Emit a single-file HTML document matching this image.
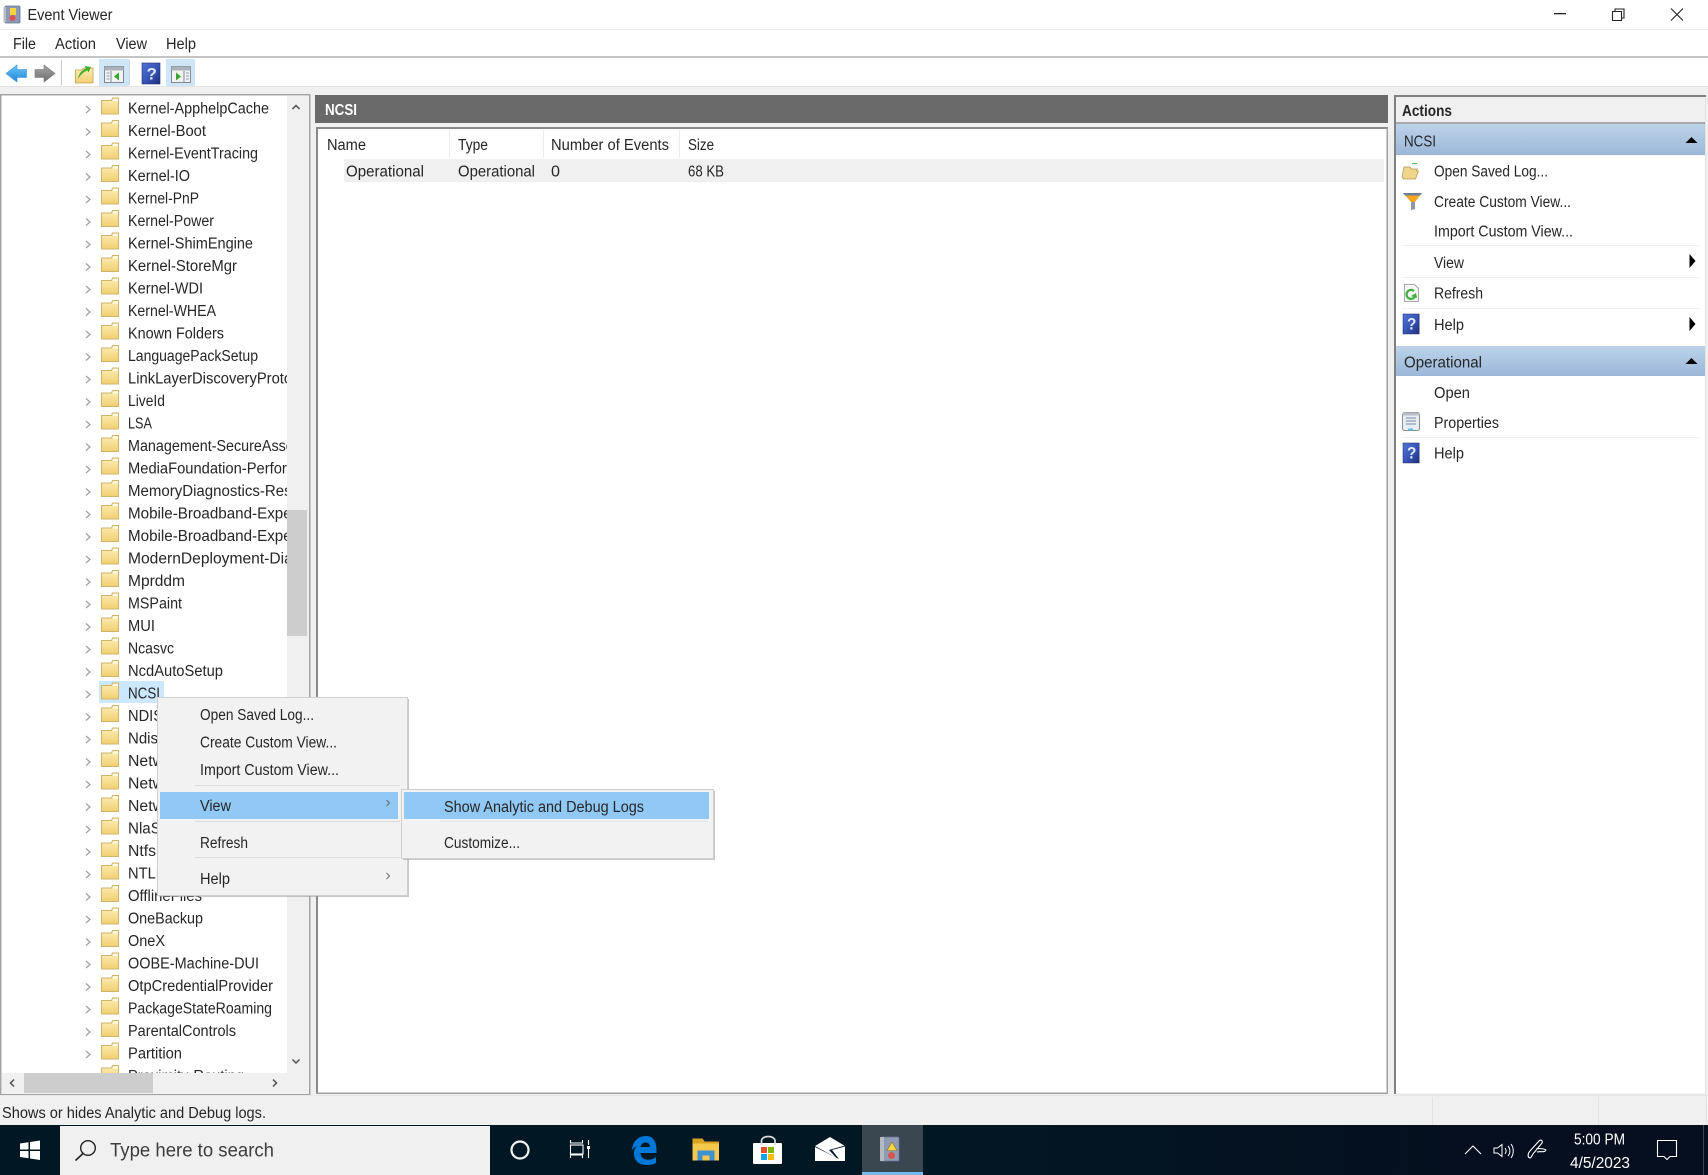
<!DOCTYPE html>
<html><head><meta charset="utf-8"><title>Event Viewer</title>
<style>
html,body{margin:0;padding:0;background:#f0f0f0;width:1708px;height:1175px;overflow:hidden}
svg{display:block}
text{font-family:"Liberation Sans",sans-serif;font-size:15.5px;fill:#262626}
</style></head><body>
<svg width="1708" height="1175" viewBox="0 0 1708 1175" xmlns="http://www.w3.org/2000/svg">
<defs>
<linearGradient id="band" x1="0" y1="0" x2="0" y2="1"><stop offset="0" stop-color="#bcd3ea"/><stop offset="1" stop-color="#9bb7d8"/></linearGradient>
<linearGradient id="fold" x1="0" y1="0" x2="0" y2="1"><stop offset="0" stop-color="#fdeeb6"/><stop offset="1" stop-color="#f1cf72"/></linearGradient>
<linearGradient id="hlp" x1="0" y1="0" x2="1" y2="1"><stop offset="0" stop-color="#4f74d8"/><stop offset=".55" stop-color="#3653b4"/><stop offset="1" stop-color="#1f2f7c"/></linearGradient>
<linearGradient id="blue" x1="0" y1="0" x2="0" y2="1"><stop offset="0" stop-color="#6cc4f6"/><stop offset="1" stop-color="#1e88dc"/></linearGradient>
<linearGradient id="gray" x1="0" y1="0" x2="0" y2="1"><stop offset="0" stop-color="#a8a8a8"/><stop offset="1" stop-color="#6c6c6c"/></linearGradient>
<linearGradient id="tb" x1="0" y1="0" x2="1" y2="0"><stop offset="0" stop-color="#021724"/><stop offset=".55" stop-color="#021724"/><stop offset=".85" stop-color="#050f1f"/><stop offset="1" stop-color="#050f1f"/></linearGradient>
<g id="r">
<path d="M86 -2l4 3.500l-4 3.500" fill="none" stroke="#a0a0a0" stroke-width="1.200"/>
<path d="M101.500 -7.500h10l1-2.500h6v16h-17z" fill="url(#fold)" stroke="#cfb46c" stroke-width="1"/>
<rect x="113" y="-9" width="5" height="2" fill="#fff" opacity=".8"/>
</g>
<g id="hq">
<rect x="0" y="0" width="18" height="21" fill="url(#hlp)" stroke="#22306f" stroke-width=".6"/>
<text x="4.500" y="16.500" style="font-size:17px;font-weight:bold;fill:#dfe6ff">?</text>
</g>
<clipPath id="tc"><rect x="0" y="96" width="287" height="977"/></clipPath>
</defs>

<!-- window chrome -->
<rect width="1708" height="1175" fill="#f0f0f0"/>
<rect width="1708" height="29" fill="#fff"/>
<rect y="29" width="1708" height="1" fill="#ececec"/>
<rect y="30" width="1708" height="26" fill="#fff"/>
<rect y="56" width="1708" height="2" fill="#c4c4c4"/>
<rect y="58" width="1708" height="28" fill="#fff"/>
<rect y="86" width="1708" height="1" fill="#e2e2e2"/>

<!-- title -->
<g>
<rect x="5" y="6" width="15" height="17" rx="1" fill="#8c9ab8" stroke="#66748f" stroke-width=".8"/>
<rect x="3.500" y="7" width="2.500" height="15" fill="#b8bcc4"/>
<rect x="10" y="8" width="6" height="7" fill="#f5d63c"/>
<circle cx="12.500" cy="18" r="3" fill="#d9534f"/>
</g>
<text x="27.500" y="20" style="font-size:15.500px" textLength="85" lengthAdjust="spacingAndGlyphs">Event Viewer</text>
<rect x="1554" y="13" width="12" height="1.300" fill="#222"/>
<path d="M1612.500 11.500h9v9h-9zM1615 11.500v-2.500h9v9h-2.500" fill="none" stroke="#222" stroke-width="1.100"/>
<path d="M1671 8.500l12 12M1683 8.500l-12 12" stroke="#222" stroke-width="1.100"/>

<!-- menubar -->
<text x="13" y="49" textLength="23" lengthAdjust="spacingAndGlyphs">File</text>
<text x="55" y="49" textLength="41" lengthAdjust="spacingAndGlyphs">Action</text>
<text x="116" y="49" textLength="31" lengthAdjust="spacingAndGlyphs">View</text>
<text x="166" y="49" textLength="30" lengthAdjust="spacingAndGlyphs">Help</text>

<!-- toolbar -->
<path d="M6 73.500l11-8.500v4.500h9.500v8h-9.500v4.500z" fill="url(#blue)" stroke="#3b94dc" stroke-width=".6"/>
<path d="M55 73.500l-11-8.500v4.500h-9v8h9v4.500z" fill="url(#gray)" stroke="#777" stroke-width=".6"/>
<rect x="61" y="60" width="1" height="25" fill="#c8c8c8"/>
<path d="M75.500 70h6l2-2h9.500v15h-17.500z" fill="url(#fold)" stroke="#c0a050" stroke-width=".8"/>
<path d="M78 79c1-6 4-9 8-10.500l-1.500-2.500 6.500 1-2.500 5.500-1-2c-3 1-6 3-9.500 8.500z" fill="#3fae2a"/>
<rect x="99" y="59" width="30" height="27" fill="#cfe5f8"/>
<rect x="104.500" y="66.500" width="19" height="16" fill="#f2f2f2" stroke="#7f8a92"/>
<rect x="104.500" y="66.500" width="19" height="4" fill="#aab3bb"/>
<path d="M111 71v11" stroke="#7f8a92"/>
<path d="M106.500 73h3M106.500 76h3M106.500 79h3" stroke="#8aa0b8"/>
<path d="M114 76.500l5-4v8z" fill="#35a82e"/>
<rect x="129" y="60" width="1" height="25" fill="#d4d4d4"/>
<g transform="translate(142,63)"><use href="#hq"/></g>
<rect x="166" y="59" width="29" height="27" fill="#cfe5f8"/>
<rect x="171.500" y="66.500" width="19" height="16" fill="#f2f2f2" stroke="#7f8a92"/>
<rect x="171.500" y="66.500" width="19" height="4" fill="#aab3bb"/>
<path d="M184 71v11" stroke="#7f8a92"/>
<path d="M186 73h3M186 76h3M186 79h3" stroke="#8aa0b8"/>
<path d="M181 76.500l-5-4v8z" fill="#35a82e"/>

<!-- tree pane -->
<rect x=".75" y="94.750" width="309" height="1000" fill="#fff" stroke="#a4a4a4" stroke-width="1.500"/>
<g clip-path="url(#tc)">
<rect x="99" y="681" width="65" height="22" fill="#cce8ff"/>
<use href="#r" y="108"/><text x="128" y="113.500" textLength="141" lengthAdjust="spacingAndGlyphs">Kernel-ApphelpCache</text>
<use href="#r" y="130.500"/><text x="128" y="136" textLength="78" lengthAdjust="spacingAndGlyphs">Kernel-Boot</text>
<use href="#r" y="153"/><text x="128" y="158.500" textLength="130" lengthAdjust="spacingAndGlyphs">Kernel-EventTracing</text>
<use href="#r" y="175.500"/><text x="128" y="181" textLength="62" lengthAdjust="spacingAndGlyphs">Kernel-IO</text>
<use href="#r" y="198"/><text x="128" y="203.500" textLength="71" lengthAdjust="spacingAndGlyphs">Kernel-PnP</text>
<use href="#r" y="220.500"/><text x="128" y="226" textLength="86" lengthAdjust="spacingAndGlyphs">Kernel-Power</text>
<use href="#r" y="243"/><text x="128" y="248.500" textLength="125" lengthAdjust="spacingAndGlyphs">Kernel-ShimEngine</text>
<use href="#r" y="265.500"/><text x="128" y="271" textLength="109" lengthAdjust="spacingAndGlyphs">Kernel-StoreMgr</text>
<use href="#r" y="288"/><text x="128" y="293.500" textLength="75" lengthAdjust="spacingAndGlyphs">Kernel-WDI</text>
<use href="#r" y="310.500"/><text x="128" y="316" textLength="88" lengthAdjust="spacingAndGlyphs">Kernel-WHEA</text>
<use href="#r" y="333"/><text x="128" y="338.500" textLength="96" lengthAdjust="spacingAndGlyphs">Known Folders</text>
<use href="#r" y="355.500"/><text x="128" y="361" textLength="130" lengthAdjust="spacingAndGlyphs">LanguagePackSetup</text>
<use href="#r" y="378"/><text x="128" y="383.500" textLength="183" lengthAdjust="spacingAndGlyphs">LinkLayerDiscoveryProtocol</text>
<use href="#r" y="400.500"/><text x="128" y="406" textLength="37" lengthAdjust="spacingAndGlyphs">LiveId</text>
<use href="#r" y="423"/><text x="128" y="428.500" textLength="24" lengthAdjust="spacingAndGlyphs">LSA</text>
<use href="#r" y="445.500"/><text x="128" y="451" textLength="212" lengthAdjust="spacingAndGlyphs">Management-SecureAssessment</text>
<use href="#r" y="468"/><text x="128" y="473.500" textLength="203" lengthAdjust="spacingAndGlyphs">MediaFoundation-Performance</text>
<use href="#r" y="490.500"/><text x="128" y="496" textLength="187" lengthAdjust="spacingAndGlyphs">MemoryDiagnostics-Results</text>
<use href="#r" y="513"/><text x="128" y="518.500" textLength="205" lengthAdjust="spacingAndGlyphs">Mobile-Broadband-Experience</text>
<use href="#r" y="535.500"/><text x="128" y="541" textLength="205" lengthAdjust="spacingAndGlyphs">Mobile-Broadband-Experience</text>
<use href="#r" y="558"/><text x="128" y="563.500" textLength="222" lengthAdjust="spacingAndGlyphs">ModernDeployment-Diagnostics</text>
<use href="#r" y="580.500"/><text x="128" y="586" textLength="57" lengthAdjust="spacingAndGlyphs">Mprddm</text>
<use href="#r" y="603"/><text x="128" y="608.500" textLength="54" lengthAdjust="spacingAndGlyphs">MSPaint</text>
<use href="#r" y="625.500"/><text x="128" y="631" textLength="27" lengthAdjust="spacingAndGlyphs">MUI</text>
<use href="#r" y="648"/><text x="128" y="653.500" textLength="46" lengthAdjust="spacingAndGlyphs">Ncasvc</text>
<use href="#r" y="670.500"/><text x="128" y="676" textLength="95" lengthAdjust="spacingAndGlyphs">NcdAutoSetup</text>
<use href="#r" y="693"/><text x="128" y="698.500" textLength="32" lengthAdjust="spacingAndGlyphs">NCSI</text>
<use href="#r" y="715.500"/><text x="128" y="721" textLength="35" lengthAdjust="spacingAndGlyphs">NDIS</text>
<use href="#r" y="738"/><text x="128" y="743.500" textLength="30" lengthAdjust="spacingAndGlyphs">Ndis</text>
<use href="#r" y="760.500"/><text x="128" y="766" textLength="58" lengthAdjust="spacingAndGlyphs">Network</text>
<use href="#r" y="783"/><text x="128" y="788.500" textLength="58" lengthAdjust="spacingAndGlyphs">Network</text>
<use href="#r" y="805.500"/><text x="128" y="811" textLength="58" lengthAdjust="spacingAndGlyphs">Network</text>
<use href="#r" y="828"/><text x="128" y="833.500" textLength="48" lengthAdjust="spacingAndGlyphs">NlaSvc</text>
<use href="#r" y="850.500"/><text x="128" y="856" textLength="28" lengthAdjust="spacingAndGlyphs">Ntfs</text>
<use href="#r" y="873"/><text x="128" y="878.500" textLength="40" lengthAdjust="spacingAndGlyphs">NTLM</text>
<use href="#r" y="895.500"/><text x="128" y="901" textLength="74" lengthAdjust="spacingAndGlyphs">OfflineFiles</text>
<use href="#r" y="918"/><text x="128" y="923.500" textLength="75" lengthAdjust="spacingAndGlyphs">OneBackup</text>
<use href="#r" y="940.500"/><text x="128" y="946" textLength="37" lengthAdjust="spacingAndGlyphs">OneX</text>
<use href="#r" y="963"/><text x="128" y="968.500" textLength="131" lengthAdjust="spacingAndGlyphs">OOBE-Machine-DUI</text>
<use href="#r" y="985.500"/><text x="128" y="991" textLength="145" lengthAdjust="spacingAndGlyphs">OtpCredentialProvider</text>
<use href="#r" y="1008"/><text x="128" y="1013.500" textLength="144" lengthAdjust="spacingAndGlyphs">PackageStateRoaming</text>
<use href="#r" y="1030.500"/><text x="128" y="1036" textLength="108" lengthAdjust="spacingAndGlyphs">ParentalControls</text>
<use href="#r" y="1053"/><text x="128" y="1058.500" textLength="54" lengthAdjust="spacingAndGlyphs">Partition</text>
<use href="#r" y="1075.500"/><text x="128" y="1081" textLength="116" lengthAdjust="spacingAndGlyphs">Proximity-Routing</text>
</g>
<!-- tree scrollbars -->
<rect x="287" y="96" width="22" height="998" fill="#f0f0f0"/>
<rect x="287" y="510" width="20" height="126" fill="#cdcdcd"/>
<path d="M292.500 109l3.500-3.500 3.500 3.500" fill="none" stroke="#505050" stroke-width="1.500"/>
<path d="M292.500 1059.500l3.500 3.500 3.500-3.500" fill="none" stroke="#505050" stroke-width="1.500"/>
<rect x="2" y="1073" width="307" height="21" fill="#f0f0f0"/>
<rect x="24" y="1073" width="129" height="20" fill="#cdcdcd"/>
<path d="M14 1079.500l-3.500 3.500 3.500 3.500" fill="none" stroke="#505050" stroke-width="1.500"/>
<path d="M273 1079.500l3.500 3.500-3.500 3.500" fill="none" stroke="#505050" stroke-width="1.500"/>

<!-- middle pane -->
<rect x="315" y="95" width="1073" height="28" fill="#696969"/>
<text x="325" y="115" style="font-weight:bold;fill:#fff" textLength="32" lengthAdjust="spacingAndGlyphs">NCSI</text>
<rect x="316" y="127" width="1072" height="967" fill="#fff"/>
<rect x="316" y="127" width="1072" height="2" fill="#8a8a8a"/>
<rect x="316" y="127" width="2" height="967" fill="#8a8a8a"/>
<rect x="1386.500" y="128" width="1.500" height="966" fill="#a0a0a0"/>
<rect x="316" y="1092.500" width="1072" height="1.500" fill="#a0a0a0"/>
<rect x="449" y="130" width="1" height="28" fill="#ececec"/>
<rect x="543" y="130" width="1" height="28" fill="#ececec"/>
<rect x="679" y="130" width="1" height="28" fill="#ececec"/>
<text x="327" y="150" textLength="39" lengthAdjust="spacingAndGlyphs">Name</text>
<text x="458" y="150" textLength="30" lengthAdjust="spacingAndGlyphs">Type</text>
<text x="551" y="150" textLength="118" lengthAdjust="spacingAndGlyphs">Number of Events</text>
<text x="688" y="150" textLength="26" lengthAdjust="spacingAndGlyphs">Size</text>
<rect x="344" y="159" width="1040" height="23" fill="#f0f0f0"/>
<text x="346" y="176.500" textLength="78" lengthAdjust="spacingAndGlyphs">Operational</text>
<text x="458" y="176.500" textLength="77" lengthAdjust="spacingAndGlyphs">Operational</text>
<text x="551" y="176.500" textLength="9" lengthAdjust="spacingAndGlyphs">0</text>
<text x="688" y="176.500" textLength="36" lengthAdjust="spacingAndGlyphs">68 KB</text>

<!-- actions pane -->
<rect x="1394" y="95" width="311" height="999" fill="#fff"/>
<rect x="1394" y="95" width="312" height="2" fill="#808080"/>
<rect x="1394" y="95" width="2" height="999" fill="#808080"/>
<rect x="1705" y="97" width="1" height="997" fill="#e4e4e4"/>
<rect x="1396" y="1093.500" width="310" height="1" fill="#e4e4e4"/>
<rect x="1396" y="97" width="309" height="25" fill="#f0f0f0"/>
<rect x="1396" y="122" width="309" height="2" fill="#a8a8a8"/>
<text x="1402" y="116" style="font-weight:bold" textLength="50" lengthAdjust="spacingAndGlyphs">Actions</text>
<rect x="1396" y="124" width="309" height="31" fill="url(#band)"/>
<text x="1404" y="146.500" textLength="32" lengthAdjust="spacingAndGlyphs">NCSI</text>
<path d="M1685.500 143l6-6 6 6z" fill="#000"/>
<path d="M1402 177l2-10h6l1.500 2h6l-1 2h2l-3 8h-12z" fill="#efd68c" stroke="#ad9552" stroke-width=".7"/>
<rect x="1412" y="163" width="5" height="1" fill="#58c058"/>
<text x="1434" y="176.500" textLength="114" lengthAdjust="spacingAndGlyphs">Open Saved Log...</text>
<path d="M1403 193h19l-7 9v7l-4 1v-8z" fill="#f5a623"/>
<path d="M1403 193h19l-2 2.500h-15z" fill="#6a8098"/>
<path d="M1411 202h4v7l-4 1z" fill="#8a98a8"/>
<text x="1434" y="207" textLength="137" lengthAdjust="spacingAndGlyphs">Create Custom View...</text>
<text x="1434" y="236.500" textLength="139" lengthAdjust="spacingAndGlyphs">Import Custom View...</text>
<rect x="1402" y="245" width="297" height="1" fill="#f0f0f0"/>
<text x="1434" y="268" textLength="30" lengthAdjust="spacingAndGlyphs">View</text>
<path d="M1689.500 254l6 7-6 7z" fill="#000"/>
<rect x="1402" y="277" width="297" height="1" fill="#f0f0f0"/>
<path d="M1404.500 284.500h10l4 4v13h-14z" fill="#f6f6f6" stroke="#a8a8a8"/>
<path d="M1415.500 295a4.500 4.500 0 1 1-1.500-4" fill="none" stroke="#3eb13e" stroke-width="2.200"/>
<path d="M1411 296l5-3 1 5z" fill="#3eb13e"/>
<text x="1434" y="298.500" textLength="49" lengthAdjust="spacingAndGlyphs">Refresh</text>
<rect x="1402" y="308" width="297" height="1" fill="#f0f0f0"/>
<g transform="translate(1403,314)"><use href="#hq" transform="scale(.9 .95)"/></g>
<text x="1434" y="330" textLength="30" lengthAdjust="spacingAndGlyphs">Help</text>
<path d="M1689.500 317l6 7-6 7z" fill="#000"/>
<rect x="1396" y="346" width="309" height="30" fill="url(#band)"/>
<text x="1404" y="367.500" textLength="78" lengthAdjust="spacingAndGlyphs">Operational</text>
<path d="M1685.500 364l6-6 6 6z" fill="#000"/>
<text x="1434" y="398" textLength="36" lengthAdjust="spacingAndGlyphs">Open</text>
<rect x="1402.500" y="412.500" width="17" height="18" rx="2" fill="#e8edf2" stroke="#8c8c8c"/>
<rect x="1402.500" y="412.500" width="17" height="3" fill="#b8bec4"/>
<path d="M1406 418h10M1406 421h10M1406 424h10" stroke="#8aa0b8" stroke-width="1.200"/>
<rect x="1408" y="428.500" width="5" height="2" fill="#5cc0e8"/>
<text x="1434" y="428" textLength="65" lengthAdjust="spacingAndGlyphs">Properties</text>
<rect x="1402" y="437" width="297" height="1" fill="#f0f0f0"/>
<g transform="translate(1403,443)"><use href="#hq" transform="scale(.9 .95)"/></g>
<text x="1434" y="458.500" textLength="30" lengthAdjust="spacingAndGlyphs">Help</text>

<!-- status bar -->
<rect y="1096" width="1708" height="30" fill="#f0f0f0"/>
<rect y="1095" width="1708" height="1" fill="#e8e8e8"/>
<rect x="1432" y="1097" width="1" height="28" fill="#e2e2e2"/>
<rect x="1598" y="1097" width="1" height="28" fill="#e2e2e2"/>
<rect x="1706" y="1097" width="1" height="28" fill="#e2e2e2"/>
<text x="2" y="1118" textLength="264" lengthAdjust="spacingAndGlyphs">Shows or hides Analytic and Debug logs.</text>

<!-- context menu -->
<rect x="159" y="699" width="250" height="198" fill="#9a9a9a" opacity=".55"/>
<rect x="157.500" y="697.500" width="250" height="198" fill="#f2f2f2" stroke="#cfcfcf"/>
<text x="200" y="720" textLength="114" lengthAdjust="spacingAndGlyphs">Open Saved Log...</text>
<text x="200" y="747.500" textLength="137" lengthAdjust="spacingAndGlyphs">Create Custom View...</text>
<text x="200" y="775" textLength="139" lengthAdjust="spacingAndGlyphs">Import Custom View...</text>
<rect x="195" y="785" width="205" height="1" fill="#dcdcdc"/>
<rect x="160" y="792" width="238" height="27" fill="#90c8f6"/>
<text x="200" y="811" textLength="31" lengthAdjust="spacingAndGlyphs">View</text>
<path d="M386.500 800l3 3-3 3" fill="none" stroke="#6a6a6a"/>
<rect x="195" y="821" width="205" height="1" fill="#dcdcdc"/>
<text x="200" y="848" textLength="48" lengthAdjust="spacingAndGlyphs">Refresh</text>
<rect x="195" y="857" width="205" height="1" fill="#dcdcdc"/>
<text x="200" y="884" textLength="30" lengthAdjust="spacingAndGlyphs">Help</text>
<path d="M386.500 873l3 3-3 3" fill="none" stroke="#6a6a6a"/>

<!-- submenu -->
<rect x="403" y="791" width="312" height="69" fill="#9a9a9a" opacity=".55"/>
<rect x="401.500" y="789.500" width="312" height="69" fill="#f2f2f2" stroke="#cfcfcf"/>
<rect x="404" y="792" width="305" height="27" fill="#90c8f6"/>
<text x="444" y="812" textLength="200" lengthAdjust="spacingAndGlyphs">Show Analytic and Debug Logs</text>
<rect x="440" y="821" width="268" height="1" fill="#e4e4e4"/>
<text x="444" y="848" textLength="76" lengthAdjust="spacingAndGlyphs">Customize...</text>

<!-- taskbar -->
<rect y="1125" width="1708" height="50" fill="url(#tb)"/>
<rect x="1703" y="1125" width="1" height="50" fill="#3a4452"/>
<path d="M20 1143.500l8.500-1.200v7.200h-8.500zM30 1142l10-1.500v9h-10zM20 1151h8.500v7.200l-8.500-1.200zM30 1151h10v9l-10-1.500z" fill="#fff"/>
<rect x="60" y="1126" width="430" height="49" fill="#f0f0f0"/>
<circle cx="88" cy="1148" r="7.300" fill="none" stroke="#222" stroke-width="1.400"/>
<path d="M83 1153.500l-7.500 7" stroke="#222" stroke-width="1.600"/>
<text x="110" y="1156.500" style="font-size:19px;fill:#3d3d3d" textLength="164" lengthAdjust="spacingAndGlyphs">Type here to search</text>

<circle cx="520" cy="1150" r="8.500" fill="none" stroke="#f2f2f2" stroke-width="2.200"/>
<path d="M570.500 1140v3h12v-3M570.500 1158v-3h12v3" fill="none" stroke="#fff" stroke-width="1.100"/>
<rect x="570.500" y="1145" width="12.500" height="9" fill="none" stroke="#fff" stroke-width="1.100"/>
<path d="M588.500 1140v5M588.500 1149v9" stroke="#fff" stroke-width="1.100"/>
<rect x="587" y="1146" width="3" height="3" fill="#fff"/>

<path d="M632 1151c0-9 6-15 14-15 7 0 10.500 5 10.500 15v2h-16c0 7 9 9 15.500 4v6c-3 1.500-6 2-9 2-9 0-13-5-13-11 0-3 .5-6 3-8-2.500 1-4.500 3-5.500 5zM640.500 1147h9.500c0-6-8.500-6-9.500 0z" fill="#0078d7" fill-rule="evenodd"/>

<path d="M692.500 1138.500h10l2 3h14.500v19h-26.500z" fill="#f4c84c"/>
<path d="M692.500 1138.500h10l2 3h14.500v2h-26.500z" fill="#d9a21f"/>
<path d="M697.500 1160.500v-10h17v10h-5v-5h-7v5z" fill="#3f92d2"/>

<rect x="753" y="1143" width="29" height="21" rx="1" fill="#fff"/>
<path d="M761.500 1145v-4c0-6 13.500-6 13.500 0v4" fill="none" stroke="#dcdcdc" stroke-width="1.700"/>
<rect x="761" y="1147" width="6" height="6" fill="#e8502a"/>
<rect x="768" y="1147" width="6" height="6" fill="#7fba00"/>
<rect x="761" y="1154" width="6" height="6" fill="#0ea5e9"/>
<rect x="768" y="1154" width="6" height="6" fill="#ffb900"/>

<path d="M815 1146l15-9 15 9v15h-30z" fill="#fff"/>
<path d="M815 1146l21 11.500-7-7.500 16-4.500v1l-13 3.500 7 9-24-12z" fill="#021724"/>

<rect x="862" y="1125" width="61" height="50" fill="#3a4650"/>
<rect x="862" y="1172" width="61" height="3" fill="#76b9ed"/>
<rect x="881" y="1137" width="18" height="24" rx="1" fill="#8f9bb5" stroke="#6a768f" stroke-width=".7"/>
<rect x="880" y="1137" width="4" height="24" fill="#b5b9c2"/>
<path d="M892 1142l5 8.500h-10z" fill="#f6d83e" stroke="#8a7420" stroke-width=".6"/>
<circle cx="891.500" cy="1155.500" r="3.500" fill="#d9534f"/>

<path d="M1465 1154l8-8 8 8" fill="none" stroke="#fff" stroke-width="1.100"/>
<path d="M1494 1148h3.500l4.500-3.500v12l-4.500-3.500h-3.500z" fill="none" stroke="#fff" stroke-width="1"/>
<path d="M1505 1148c1.500 2 1.500 4 0 6M1508 1146c2.500 3 2.500 7 0 10M1511 1144c3 4 3 10 0 14" fill="none" stroke="#fff" stroke-width="1"/>
<path d="M1530 1158c-3-1-2-5 0-7l9-10c2-2 4 0 3 2l-9 11c-1 1.500-2 4-3 4zM1536 1149c4-1 9 0 10 1-1 3-6 1-9 2" fill="none" stroke="#fff" stroke-width="1.100"/>
<text x="1574" y="1144.500" style="fill:#fff;font-size:15.500px" textLength="51" lengthAdjust="spacingAndGlyphs">5:00 PM</text>
<text x="1570" y="1168" style="fill:#fff;font-size:15.500px" textLength="60" lengthAdjust="spacingAndGlyphs">4/5/2023</text>
<path d="M1657.500 1140.500h19v16h-6.500l-3 3-3-3h-6.500z" fill="none" stroke="#fff" stroke-width="1.100"/>
</svg>
</body></html>
